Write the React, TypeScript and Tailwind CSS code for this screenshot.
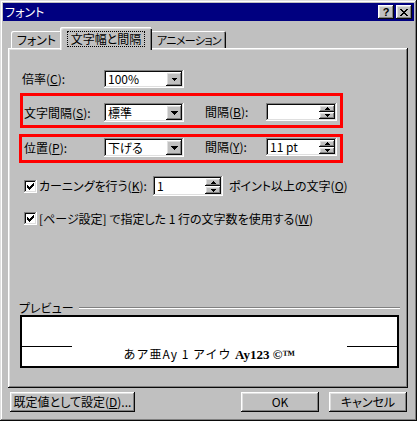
import React from "react";

const RAISED =
  "shadow-[inset_-1px_-1px_#0a0a0a,inset_1px_1px_#ffffff,inset_-2px_-2px_#808080,inset_2px_2px_#dfdfdf]";
const SUNKEN =
  "shadow-[inset_-1px_-1px_#ffffff,inset_1px_1px_#808080,inset_-2px_-2px_#dfdfdf,inset_2px_2px_#0a0a0a]";
const WINDOW =
  "shadow-[inset_-1px_-1px_#0a0a0a,inset_1px_1px_#dfdfdf,inset_-2px_-2px_#808080,inset_2px_2px_#ffffff]";

function Acc({ children }: { children: React.ReactNode }) {
  return <span className="underline underline-offset-[1px]">{children}</span>;
}

function Pixels({ w, h, rects }: { w: number; h: number; rects: number[][] }) {
  return (
    <svg width={w} height={h} viewBox={`0 0 ${w} ${h}`} shapeRendering="crispEdges">
      {rects.map(([x, y, rw], i) => (
        <rect key={i} x={x} y={y} width={rw} height={1} fill="#000" />
      ))}
    </svg>
  );
}

const DOWN7 = [[0, 0, 7], [1, 1, 5], [2, 2, 3], [3, 3, 1]];
const DOWN5 = [[0, 0, 5], [1, 1, 3], [2, 2, 1]];
const UP5 = [[2, 0, 1], [1, 1, 3], [0, 2, 5]];
const CHECK = [[6, 0, 1], [5, 1, 2], [0, 2, 1], [4, 2, 3], [0, 3, 2], [3, 3, 3], [0, 4, 5], [1, 5, 3], [2, 6, 1]];
const XMARK = [[0, 0, 2], [6, 0, 2], [1, 1, 2], [5, 1, 2], [2, 2, 4], [3, 3, 2], [2, 4, 4], [1, 5, 2], [5, 5, 2], [0, 6, 2], [6, 6, 2]];

function Select({ value, className, small }: { value: string; className: string; small?: boolean }) {
  return (
    <div className={`flex bg-white p-[2px] ${SUNKEN} ${className}`}>
      <div className="flex-1 flex items-center pl-[2px]">{value}</div>
      <div className={`w-[16px] flex items-center justify-center bg-[#c0c0c0] ${RAISED}`}>
        {small ? <Pixels w={5} h={3} rects={DOWN5} /> : <Pixels w={7} h={4} rects={DOWN7} />}
      </div>
    </div>
  );
}

function Spin({ value, className }: { value: string; className: string }) {
  return (
    <div className={`flex bg-white p-[2px] ${SUNKEN} ${className}`}>
      <div className="flex-1 flex items-center pl-[2px]">{value}</div>
      <div className="w-[16px] flex flex-col">
        <div className={`flex-1 flex items-center justify-center bg-[#c0c0c0] ${RAISED}`}>
          <Pixels w={5} h={3} rects={UP5} />
        </div>
        <div className={`flex-1 flex items-center justify-center bg-[#c0c0c0] ${RAISED}`}>
          <Pixels w={5} h={3} rects={DOWN5} />
        </div>
      </div>
    </div>
  );
}

function Check() {
  return (
    <div className={`w-[13px] h-[13px] shrink-0 bg-white flex items-center justify-center ${SUNKEN}`}>
      <Pixels w={7} h={7} rects={CHECK} />
    </div>
  );
}

function Button({ children, className }: { children: React.ReactNode; className: string }) {
  return (
    <div className={`h-[20px] flex items-center justify-center bg-[#c0c0c0] ${RAISED} ${className}`}>
      {children}
    </div>
  );
}

export default function App() {
  return (
    <div
      className={`w-[417px] h-[421px] bg-[#c0c0c0] p-[3px] flex flex-col text-black text-[12px] leading-[12px] font-['Noto_Sans_CJK_JP',sans-serif] [font-feature-settings:'palt'] ${WINDOW}`}
    >
      {/* Title bar */}
      <div className="h-[18px] shrink-0 bg-[#000080] flex items-center pl-[2px] pr-[2px] text-white">
        <span className="flex-1">フォント</span>
        <div className="flex gap-[2px]">
          <div className={`w-[16px] h-[14px] bg-[#c0c0c0] flex items-center justify-center text-black font-bold text-[11px] font-['Liberation_Sans',sans-serif] ${RAISED}`}>
            ?
          </div>
          <div className={`w-[16px] h-[14px] bg-[#c0c0c0] flex items-center justify-center ${RAISED}`}>
            <Pixels w={8} h={7} rects={XMARK} />
          </div>
        </div>
      </div>

      {/* Tabs */}
      <div className="mt-[6px] h-[21px] shrink-0 flex items-end pl-[8px] relative z-10">
        <div className="w-[51px] h-[17px] flex justify-center pt-[3px] rounded-tl-[2px] rounded-tr-[2px] shadow-[inset_1px_1px_#ffffff,inset_-1px_0_#0a0a0a,inset_-2px_0_#808080]">
          フォント
        </div>
        <div className="w-[92px] h-[23px] -mb-[2px] -mx-[2px] relative z-10 bg-[#c0c0c0] flex justify-center pt-[4px] rounded-tl-[2px] rounded-tr-[2px] shadow-[inset_1px_1px_#ffffff,inset_2px_2px_#dfdfdf,inset_-1px_0_#0a0a0a,inset_-2px_0_#808080]">
          <span className="h-[16px] px-[3px] pt-[1px] border border-dotted border-black">文字幅と間隔</span>
        </div>
        <div className="w-[76px] h-[17px] flex justify-center pt-[3px] pl-[2px] rounded-tl-[2px] rounded-tr-[2px] shadow-[inset_1px_1px_#ffffff,inset_-1px_0_#0a0a0a,inset_-2px_0_#808080]">
          <span className="whitespace-nowrap text-[11px] tracking-[-0.6px]">アニメーション</span>
        </div>
      </div>

      {/* Panel */}
      <div className={`ml-[5px] w-[400px] h-[340px] shrink-0 ${RAISED}`}>
        <div className="flex flex-col pl-[12px] pt-[22px]">
          <div className="pl-[2px] flex items-center h-[18px]">
            <div className="w-[82px]">
              倍率(<Acc>C</Acc>):
            </div>
            <Select value="100%" className="w-[80px] h-[18px]" small />
          </div>

          <div className="mt-[5px] w-[323px] h-[35px] border-[3px] border-[#ff0000] flex items-start pt-[7px] pl-[1px]">
            <div className="w-[80px] h-[19px] flex items-center">
              文字間隔(<Acc>S</Acc>):
            </div>
            <Select value="標準" className="w-[80px] h-[19px]" />
            <div className="ml-[21px] w-[61px] h-[18px] flex items-center">
              間隔(<Acc>B</Acc>):
            </div>
            <Spin value="" className="w-[71px] h-[18px]" />
          </div>

          <div className="mt-[6px] -ml-[1px] w-[324px] h-[29px] border-[3px] border-[#ff0000] flex items-start pt-[1px] pl-[2px]">
            <div className="w-[80px] h-[19px] flex items-center">
              位置(<Acc>P</Acc>):
            </div>
            <Select value="下げる" className="w-[80px] h-[19px]" />
            <div className="ml-[21px] w-[61px] h-[18px] flex items-center">
              間隔(<Acc>Y</Acc>):
            </div>
            <Spin value="11 pt" className="w-[71px] h-[18px]" />
          </div>

          <div className="mt-[13px] h-[20px] flex items-center pl-[4px]">
            <Check />
            <div className="ml-[2px] w-[114px]">
              カーニングを行う(<Acc>K</Acc>):
            </div>
            <Spin value="1" className="w-[70px] h-[20px]" />
            <div className="ml-[6px]">
              ポイント以上の文字(<Acc>O</Acc>)
            </div>
          </div>

          <div className="mt-[16px] h-[13px] flex items-center pl-[4px]">
            <Check />
            <div className="ml-[2px] whitespace-nowrap">
              [ページ設定] で指定した 1 行の文字数を使用する(<Acc>W</Acc>)
            </div>
          </div>

          <div className="mt-[76px] -ml-[1px] w-[381px] h-[14px] flex items-center">
            <div className="shrink-0 whitespace-nowrap">プレビュー</div>
            <div className="flex-1 ml-[5px] flex flex-col">
              <div className="h-px bg-[#808080]" />
              <div className="h-px bg-white" />
            </div>
          </div>

          <div className="w-[379px] h-[53px] border-2 border-black bg-white flex items-start pt-[29px]">
            <div className="w-[50px] h-px bg-black" />
            <div className="flex-1 flex justify-center items-baseline pt-[2px] whitespace-nowrap [font-feature-settings:normal]">
              <span className="tracking-[1px]">あア亜Ay 1 アイウ&nbsp;</span>
              <span className="font-['Liberation_Serif',serif] text-[13px] font-bold">Ay123 ©™</span>
            </div>
            <div className="w-[50px] h-px bg-black" />
          </div>
        </div>
      </div>

      {/* Bottom buttons */}
      <div className="mt-[4px] h-[20px] shrink-0 flex">
        <Button className="ml-[7px] w-[125px]">
          既定値として設定(<Acc>D</Acc>)...
        </Button>
        <Button className="ml-auto w-[78px]">OK</Button>
        <Button className="ml-[10px] mr-[7px] w-[78px]">キャンセル</Button>
      </div>
    </div>
  );
}
